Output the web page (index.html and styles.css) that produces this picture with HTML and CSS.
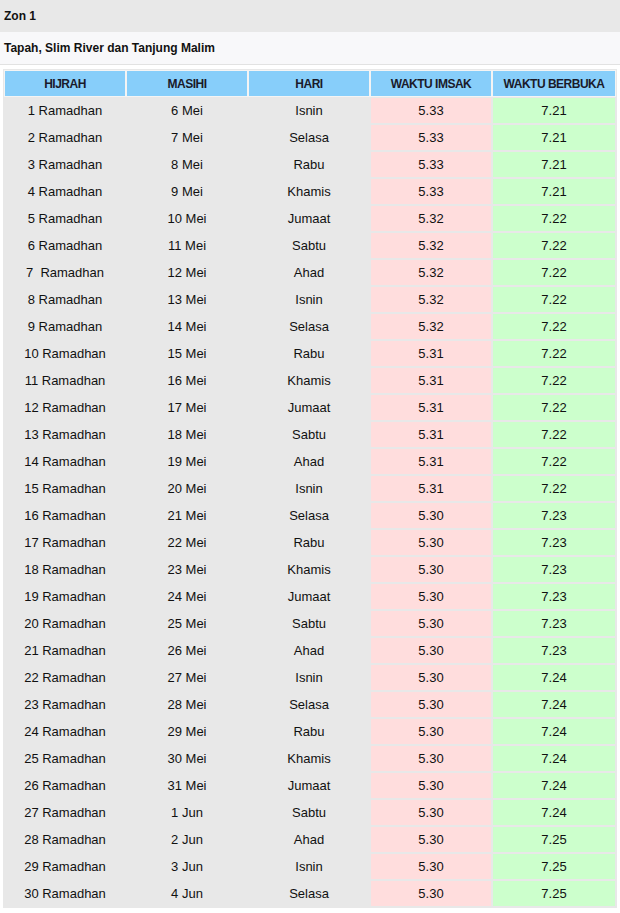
FILE: index.html
```html
<!DOCTYPE html>
<html lang="ms">
<head>
<meta charset="utf-8">
<title>Zon 1</title>
<link rel="stylesheet" href="styles.css">
</head>
<body>
<div class="zone">Zon 1</div>
<div class="area">Tapah, Slim River dan Tanjung Malim</div>
<table class="times">
<thead>
<tr><th>HIJRAH</th><th>MASIHI</th><th>HARI</th><th>WAKTU IMSAK</th><th>WAKTU BERBUKA</th></tr>
</thead>
<tbody>
<tr><td>1 Ramadhan</td><td>6 Mei</td><td>Isnin</td><td class="imsak">5.33</td><td class="buka">7.21</td></tr>
<tr><td>2 Ramadhan</td><td>7 Mei</td><td>Selasa</td><td class="imsak">5.33</td><td class="buka">7.21</td></tr>
<tr><td>3 Ramadhan</td><td>8 Mei</td><td>Rabu</td><td class="imsak">5.33</td><td class="buka">7.21</td></tr>
<tr><td>4 Ramadhan</td><td>9 Mei</td><td>Khamis</td><td class="imsak">5.33</td><td class="buka">7.21</td></tr>
<tr><td>5 Ramadhan</td><td>10 Mei</td><td>Jumaat</td><td class="imsak">5.32</td><td class="buka">7.22</td></tr>
<tr><td>6 Ramadhan</td><td>11 Mei</td><td>Sabtu</td><td class="imsak">5.32</td><td class="buka">7.22</td></tr>
<tr><td>7&nbsp; Ramadhan</td><td>12 Mei</td><td>Ahad</td><td class="imsak">5.32</td><td class="buka">7.22</td></tr>
<tr><td>8 Ramadhan</td><td>13 Mei</td><td>Isnin</td><td class="imsak">5.32</td><td class="buka">7.22</td></tr>
<tr><td>9 Ramadhan</td><td>14 Mei</td><td>Selasa</td><td class="imsak">5.32</td><td class="buka">7.22</td></tr>
<tr><td>10 Ramadhan</td><td>15 Mei</td><td>Rabu</td><td class="imsak">5.31</td><td class="buka">7.22</td></tr>
<tr><td>11 Ramadhan</td><td>16 Mei</td><td>Khamis</td><td class="imsak">5.31</td><td class="buka">7.22</td></tr>
<tr><td>12 Ramadhan</td><td>17 Mei</td><td>Jumaat</td><td class="imsak">5.31</td><td class="buka">7.22</td></tr>
<tr><td>13 Ramadhan</td><td>18 Mei</td><td>Sabtu</td><td class="imsak">5.31</td><td class="buka">7.22</td></tr>
<tr><td>14 Ramadhan</td><td>19 Mei</td><td>Ahad</td><td class="imsak">5.31</td><td class="buka">7.22</td></tr>
<tr><td>15 Ramadhan</td><td>20 Mei</td><td>Isnin</td><td class="imsak">5.31</td><td class="buka">7.22</td></tr>
<tr><td>16 Ramadhan</td><td>21 Mei</td><td>Selasa</td><td class="imsak">5.30</td><td class="buka">7.23</td></tr>
<tr><td>17 Ramadhan</td><td>22 Mei</td><td>Rabu</td><td class="imsak">5.30</td><td class="buka">7.23</td></tr>
<tr><td>18 Ramadhan</td><td>23 Mei</td><td>Khamis</td><td class="imsak">5.30</td><td class="buka">7.23</td></tr>
<tr><td>19 Ramadhan</td><td>24 Mei</td><td>Jumaat</td><td class="imsak">5.30</td><td class="buka">7.23</td></tr>
<tr><td>20 Ramadhan</td><td>25 Mei</td><td>Sabtu</td><td class="imsak">5.30</td><td class="buka">7.23</td></tr>
<tr><td>21 Ramadhan</td><td>26 Mei</td><td>Ahad</td><td class="imsak">5.30</td><td class="buka">7.23</td></tr>
<tr><td>22 Ramadhan</td><td>27 Mei</td><td>Isnin</td><td class="imsak">5.30</td><td class="buka">7.24</td></tr>
<tr><td>23 Ramadhan</td><td>28 Mei</td><td>Selasa</td><td class="imsak">5.30</td><td class="buka">7.24</td></tr>
<tr><td>24 Ramadhan</td><td>29 Mei</td><td>Rabu</td><td class="imsak">5.30</td><td class="buka">7.24</td></tr>
<tr><td>25 Ramadhan</td><td>30 Mei</td><td>Khamis</td><td class="imsak">5.30</td><td class="buka">7.24</td></tr>
<tr><td>26 Ramadhan</td><td>31 Mei</td><td>Jumaat</td><td class="imsak">5.30</td><td class="buka">7.24</td></tr>
<tr><td>27 Ramadhan</td><td>1 Jun</td><td>Sabtu</td><td class="imsak">5.30</td><td class="buka">7.24</td></tr>
<tr><td>28 Ramadhan</td><td>2 Jun</td><td>Ahad</td><td class="imsak">5.30</td><td class="buka">7.25</td></tr>
<tr><td>29 Ramadhan</td><td>3 Jun</td><td>Isnin</td><td class="imsak">5.30</td><td class="buka">7.25</td></tr>
<tr><td>30 Ramadhan</td><td>4 Jun</td><td>Selasa</td><td class="imsak">5.30</td><td class="buka">7.25</td></tr>
</tbody>
</table>
</body>
</html>
```
FILE: styles.css
```css
html, body {
  margin: 0;
  padding: 0;
  background: #ffffff;
  font-family: "Liberation Sans", Arial, sans-serif;
  font-size: 12px;
  color: #111111;
}

.zone {
  height: 32px;
  line-height: 32px;
  padding-left: 4px;
  background: #e8e8e8;
  font-weight: bold;
  color: #111111;
}

.area {
  height: 32px;
  line-height: 32px;
  padding-left: 4px;
  background: #f8f8fa;
  border-bottom: 1px solid #e2e2e2;
  font-weight: bold;
  color: #111111;
}

.times {
  margin: 4px 0 0 3px;
  width: 614px;
  table-layout: fixed;
  border-collapse: separate;
  border-spacing: 2px;
  background: #e8e8e8;
}

.times th:nth-child(-n+4) {
  width: 120px;
}

.times th,
.times td {
  height: 25px;
  padding: 0;
  text-align: center;
  vertical-align: middle;
  white-space: nowrap;
}

.times th {
  background: #87cefa;
  font-size: 12px;
  letter-spacing: -0.5px;
  font-weight: bold;
  color: #1a1a2a;
  box-shadow: 0 0 0 1px #f4f4f4;
}

.times td {
  background: #e8e8e8;
  font-size: 13px;
  color: #111111;
}

.times td.imsak {
  background: #ffdddd;
}

.times td.buka {
  background: #ccffcc;
}
```
